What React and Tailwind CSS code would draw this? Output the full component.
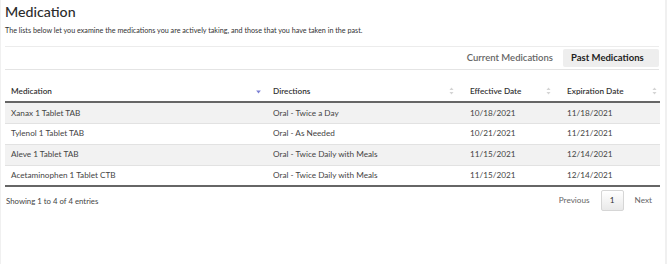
import React from "react";

const rows = [
  ["Xanax 1 Tablet TAB", "Oral - Twice a Day", "10/18/2021", "11/18/2021"],
  ["Tylenol 1 Tablet TAB", "Oral - As Needed", "10/21/2021", "11/21/2021"],
  ["Aleve 1 Tablet TAB", "Oral - Twice Daily with Meals", "11/15/2021", "12/14/2021"],
  ["Acetaminophen 1 Tablet CTB", "Oral - Twice Daily with Meals", "11/15/2021", "12/14/2021"],
];

function SortIcon() {
  return (
    <svg width="5" height="8" viewBox="0 0 5 8" className="shrink-0">
      <path d="M2.5 0.5 L4.5 3 L0.5 3 Z" fill="#d4d4d4" />
      <path d="M2.5 7.5 L4.5 5 L0.5 5 Z" fill="#d4d4d4" />
    </svg>
  );
}

function SortDown() {
  return (
    <svg width="5" height="8" viewBox="0 0 5 8" className="shrink-0">
      <path d="M2.5 6.5 L4.8 3.5 L0.2 3.5 Z" fill="#7b7fd4" />
    </svg>
  );
}

export default function App() {
  return (
    <div
      className="w-[667px] h-[264px] bg-[#f0f0f0] text-[#333]"
      style={{ fontFamily: "Lato, 'Open Sans', sans-serif" }}
    >
      <div className="ml-px w-[664px] h-[264px] bg-white pl-[4px] pr-[6px] pt-[2px]">
        <h1 className="text-[14.2px] leading-[20px] font-medium text-[#2b2b2b]">Medication</h1>
        <p className="mt-[3px] text-[7.2px] leading-[12px] text-[#333]">
          The lists below let you examine the medications you are actively taking, and those that you have taken in the past.
        </p>
        <div className="mt-[9px] border-t border-[#ececec]" />
        <div className="flex justify-end items-center gap-[10px] h-[21px] pt-[1px]">
          <span className="text-[9.5px] font-semibold text-[#666]">Current Medications</span>
          <span className="text-[9.5px] font-bold text-[#222] bg-[#eeeeee] rounded-[2px] px-[8px] h-[18px] w-[96px] flex items-center">
            Past Medications
          </span>
        </div>
        <div className="mt-[1px] border-t border-[#e4e4e4]" />
        <table className="mt-[11px] w-[655px] border-collapse text-[8.2px] text-[#444]">
          <thead>
            <tr className="border-b-[2px] border-[#666]">
              <th className="text-left font-semibold text-[#333] h-[21px] pl-[6px] w-[256px]">
                <div className="flex items-center justify-between">
                  <span>Medication</span>
                  <SortDown />
                </div>
              </th>
              <th className="text-left font-semibold text-[#333] pl-[12px] w-[197px]">
                <div className="flex items-center justify-between pr-[4px]">
                  <span>Directions</span>
                  <SortIcon />
                </div>
              </th>
              <th className="text-left font-semibold text-[#333] pl-[12px] w-[97px]">
                <div className="flex items-center justify-between pr-[4px]">
                  <span>Effective Date</span>
                  <SortIcon />
                </div>
              </th>
              <th className="text-left font-semibold text-[#333] pl-[12px]">
                <div className="flex items-center justify-between pr-[3px]">
                  <span>Expiration Date</span>
                  <SortIcon />
                </div>
              </th>
            </tr>
          </thead>
          <tbody>
            {rows.map((r, i) => (
              <tr
                key={i}
                className={
                  (i % 2 === 0 ? "bg-[#f2f2f2]" : "bg-white") +
                  (i < rows.length - 1 ? " border-b border-[#e2e2e2]" : "")
                }
              >
                <td className="h-[21px] pl-[6px]">{r[0]}</td>
                <td className="pl-[12px]">{r[1]}</td>
                <td className="pl-[12px]">{r[2]}</td>
                <td className="pl-[12px]">{r[3]}</td>
              </tr>
            ))}
          </tbody>
          <tfoot>
            <tr>
              <td colSpan={4} className="border-t-[2px] border-[#666] p-0 h-0" />
            </tr>
          </tfoot>
        </table>
        <div className="flex justify-between items-start w-[655px] mt-[3px]">
          <span className="text-[7.8px] text-[#444] mt-[6px] pl-[1px]">Showing 1 to 4 of 4 entries</span>
          <div className="flex items-center text-[8.2px] text-[#666] pr-[8px]">
            <span className="mr-[11px]">Previous</span>
            <span className="w-[23px] h-[21px] flex items-center justify-center border border-[#d6d6d6] bg-gradient-to-b from-white to-[#e9e9e9] text-[#333] rounded-[2px]">
              1
            </span>
            <span className="ml-[11px]">Next</span>
          </div>
        </div>
      </div>
    </div>
  );
}
